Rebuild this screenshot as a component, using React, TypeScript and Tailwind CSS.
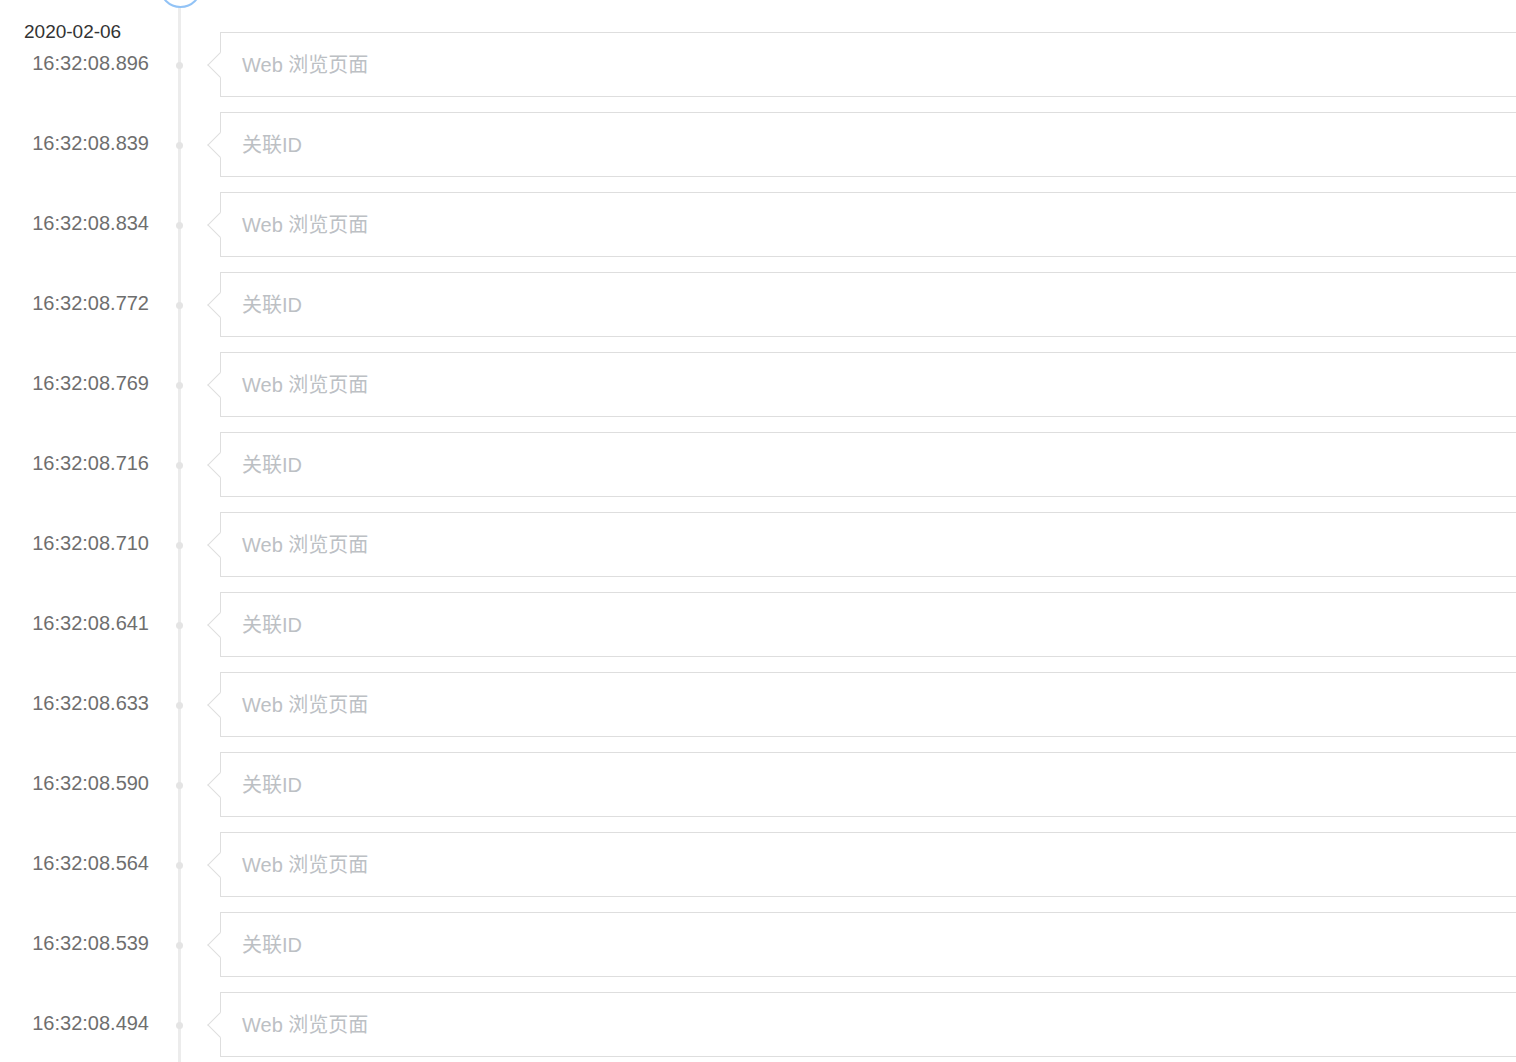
import React from "react";

interface TimelineEntry {
  time: string;
  label: string;
}

const entries: TimelineEntry[] = [
  { time: "16:32:08.896", label: "Web 浏览页面" },
  { time: "16:32:08.839", label: "关联ID" },
  { time: "16:32:08.834", label: "Web 浏览页面" },
  { time: "16:32:08.772", label: "关联ID" },
  { time: "16:32:08.769", label: "Web 浏览页面" },
  { time: "16:32:08.716", label: "关联ID" },
  { time: "16:32:08.710", label: "Web 浏览页面" },
  { time: "16:32:08.641", label: "关联ID" },
  { time: "16:32:08.633", label: "Web 浏览页面" },
  { time: "16:32:08.590", label: "关联ID" },
  { time: "16:32:08.564", label: "Web 浏览页面" },
  { time: "16:32:08.539", label: "关联ID" },
  { time: "16:32:08.494", label: "Web 浏览页面" },
];

const font = { fontFamily: '"Liberation Sans", Arial, "Noto Sans CJK SC", sans-serif' };

const App: React.FC = () => {
  return (
    <div
      className="relative w-full h-[1062px] overflow-hidden bg-white"
      style={font}
    >
      {/* timeline axis, sits behind everything */}
      <div className="absolute left-[178px] top-0 bottom-0 w-[3px] bg-[#ececec]" />
      <div className="absolute left-[159px] top-[-35px] w-[43px] h-[43px] rounded-full border-2 border-[#92c3f6] bg-white" />

      <div className="relative flex flex-col pt-[20px]">
        <div className="pl-[24px] text-[19px] leading-[24px] text-[#333]">2020-02-06</div>

        <div className="flex flex-col gap-[15px] -mt-[12px]">
          {entries.map((entry, i) => (
            <div className="flex h-[65px] items-center" key={i}>
              <div className="w-[150px] shrink-0 pr-[1px] text-right text-[20px] leading-[24px] text-[#6e6e6e] -mt-[3px]">
                {entry.time}
              </div>
              <div className="flex w-[70px] h-full shrink-0 items-center pl-[26px] pt-[2px]">
                <span className="w-[7px] h-[7px] rounded-full bg-[#e4e4e4]" />
              </div>
              <div className="relative flex-1 h-full flex items-center border border-r-0 border-[#dedede] pl-[21px]">
                <span className="absolute left-[-10px] top-[23px] w-[18px] h-[18px] rotate-45 border-l border-b border-[#dedede] bg-white" />
                <span className="relative text-[20px] leading-[24px] text-[#bcc0c4]">
                  {entry.label}
                </span>
              </div>
            </div>
          ))}
        </div>
      </div>
    </div>
  );
};

export default App;
